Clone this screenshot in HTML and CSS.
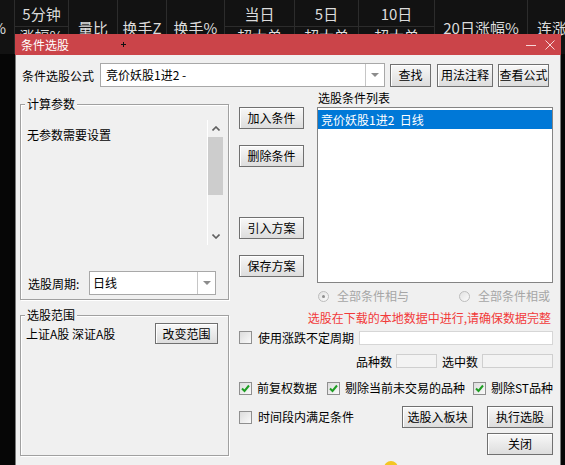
FILE: index.html
```html
<!DOCTYPE html>
<html lang="zh-CN">
<head>
<meta charset="utf-8">
<title>条件选股</title>
<link rel="stylesheet" href="styles.css">
</head>
<body>
<div class="quote-head">
  <div class="hcell span clip"><span>涨幅%</span></div>
  <div class="hcell top">5分钟</div>
  <div class="hcell span">量比</div>
  <div class="hcell span">换手Z</div>
  <div class="hcell span">换手%</div>
  <div class="hcell top">当日</div>
  <div class="hcell top">5日</div>
  <div class="hcell top">10日</div>
  <div class="hcell span">20日涨幅%</div>
  <div class="hcell span lead">连涨天数</div>
  <div class="hcell sub">涨幅%</div>
  <div class="hcell sub">超大单</div>
  <div class="hcell sub">超大单</div>
  <div class="hcell sub">超大单</div>
</div>

<div class="dialog">
  <div class="titlebar">
    <span class="title">条件选股</span>
    <span class="cursor"></span>
    <span class="win-btns">
      <svg class="win-icon" viewBox="0 0 10 10"><path d="M0 5.5H10"/></svg>
      <svg class="win-icon" viewBox="0 0 10 10"><path d="M0.5 0.5L9.5 9.5M9.5 0.5L0.5 9.5"/></svg>
    </span>
  </div>
  <div class="dlg-body">
    <div class="formula-row">
      <span class="formula-label">条件选股公式</span>
      <div class="combo formula-combo">
        <span class="combo-text">竞价妖股1进2 -</span>
        <span class="combo-btn"><i class="caret"></i></span>
      </div>
      <button class="btn btn-find">查找</button>
      <button class="btn btn-usage">用法注释</button>
      <button class="btn btn-view">查看公式</button>
    </div>

    <div class="main-row">
      <fieldset class="group params">
        <legend>计算参数</legend>
        <div class="param-panel">
          <div class="param-text">无参数需要设置</div>
          <div class="vscroll">
            <span class="vs-arrow"><svg viewBox="0 0 8 5"><path d="M0.5 4.5L4 1L7.5 4.5"/></svg></span>
            <span class="vs-thumb"></span>
            <span class="vs-track"></span>
            <span class="vs-arrow"><svg viewBox="0 0 8 5"><path d="M0.5 0.5L4 4L7.5 0.5"/></svg></span>
          </div>
        </div>
        <div class="period-row">
          <span class="period-label">选股周期:</span>
          <div class="combo period-combo">
            <span class="combo-text">日线</span>
            <span class="combo-btn"><i class="caret"></i></span>
          </div>
        </div>
      </fieldset>

      <div class="mid-col">
        <button class="btn mid-btn">加入条件</button>
        <button class="btn mid-btn">删除条件</button>
        <button class="btn mid-btn gap-big">引入方案</button>
        <button class="btn mid-btn">保存方案</button>
      </div>

      <div class="list-col">
        <div class="list-label">选股条件列表</div>
        <div class="cond-list">
          <div class="cond-item selected">竞价妖股1进2&nbsp;&nbsp;日线</div>
        </div>
        <div class="radio-row">
          <span class="radio-group"><span class="radio checked"></span><span class="radio-text">全部条件相与</span></span>
          <span class="radio-group second"><span class="radio"></span><span class="radio-text">全部条件相或</span></span>
        </div>
      </div>
    </div>

    <div class="bottom-row">
      <fieldset class="group range">
        <legend>选股范围</legend>
        <div class="range-row">
          <span class="range-text">上证A股 深证A股</span>
          <button class="btn btn-range">改变范围</button>
        </div>
      </fieldset>

      <div class="opt-col">
        <div class="warn">选股在下载的本地数据中进行,请确保数据完整</div>
        <div class="opt-line period-opt">
          <span class="check"></span><span class="check-text">使用涨跌不定周期</span>
          <span class="text-input"></span>
        </div>
        <div class="opt-line count-line">
          <span>品种数</span><span class="count-box short"></span>
          <span class="count-label2">选中数</span><span class="count-box long"></span>
        </div>
        <div class="opt-line checks-line">
          <span class="check-group g1"><span class="check on"><svg viewBox="0 0 11 11"><path d="M2 5.5L4.5 8L9 2.5"/></svg></span><span class="check-text">前复权数据</span></span>
          <span class="check-group g2"><span class="check on"><svg viewBox="0 0 11 11"><path d="M2 5.5L4.5 8L9 2.5"/></svg></span><span class="check-text">剔除当前未交易的品种</span></span>
          <span class="check-group g3"><span class="check on"><svg viewBox="0 0 11 11"><path d="M2 5.5L4.5 8L9 2.5"/></svg></span><span class="check-text">剔除ST品种</span></span>
        </div>
        <div class="opt-line action-line">
          <span class="check"></span><span class="check-text">时间段内满足条件</span>
          <button class="btn btn-block">选股入板块</button>
          <button class="btn btn-run">执行选股</button>
        </div>
        <div class="close-line">
          <button class="btn btn-run">关闭</button>
        </div>
      </div>
    </div>
  </div>
</div>
<span class="peek-dot"></span>
</body>
</html>
```

FILE: styles.css
```css
* { box-sizing: border-box; }
html, body { margin: 0; padding: 0; }
body {
  width: 565px;
  height: 465px;
  overflow: hidden;
  position: relative;
  background: #060606;
  font-family: "Noto Sans CJK SC", "Noto Sans", sans-serif;
  font-size: 12px;
  color: #000;
}

/* quote table header behind the dialog */
.quote-head {
  display: grid;
  grid-template-columns: 14px 54px 49px 49px 58px 70px 64px 76px 93px 38px;
  grid-template-rows: 27px 27px;
  width: 565px;
  height: 54px;
  overflow: hidden;
  background: #121212;
  color: #dcdcdc;
  font-size: 15px;
}
.hcell {
  border-left: 1px solid #2c2c2c;
  display: flex;
  align-items: center;
  justify-content: center;
  white-space: nowrap;
  overflow: hidden;
}
.hcell.span { grid-row: span 2; }
.hcell.top { border-bottom: 1px solid #2c2c2c; padding-top: 1px; }
.hcell.sub { padding-bottom: 10px; }
.hcell.clip { justify-content: flex-end; padding-right: 8px; border-left: 0; }
.hcell.lead { justify-content: flex-start; padding-left: 9px; }

/* dialog window */
.dialog {
  position: absolute;
  left: 15px;
  top: 34px;
  width: 546px;
  height: 440px;
  background: #f0f0f0;
  border-left: 1px solid #7a7a7a;
  border-right: 1px solid #7a7a7a;
}
.titlebar {
  position: relative;
  height: 21px;
  margin: 0 -1px;
  background: #cb4449;
  color: #fff;
  display: flex;
  align-items: center;
  padding-left: 6px;
  padding-right: 6px;
  font-size: 12px;
}
.title { line-height: 14px; }
.cursor {
  position: absolute;
  left: 106px;
  top: 8px;
  width: 5px;
  height: 5px;
  background:
    linear-gradient(#111, #111) center / 1px 5px no-repeat,
    linear-gradient(#111, #111) center / 5px 1px no-repeat;
}
.win-btns { margin-left: auto; display: flex; gap: 9px; }
.win-icon { width: 10px; height: 10px; fill: none; stroke: #f6d6d7; stroke-width: 1; }

.dlg-body { padding-left: 4px; }

.btn {
  font: inherit;
  color: #000;
  padding: 0;
  border: 1px solid #707070;
  background: linear-gradient(#f8f8f8, #dddddd);
  box-shadow: inset 1px 1px 0 #ffffff;
  height: 22px;
  line-height: 20px;
  text-align: center;
  white-space: nowrap;
}

/* row 1 */
.formula-row {
  display: flex;
  align-items: center;
  margin-top: 8px;
  height: 24px;
}
.formula-label { width: 80px; padding-left: 2px; }
.combo {
  display: flex;
  height: 24px;
  border: 1px solid #a8a8a8;
  background: #fff;
}
.combo-text { flex: 1; padding-left: 5px; line-height: 22px; white-space: nowrap; }
.combo-btn {
  width: 19px;
  border-left: 1px solid #c6c6c6;
  display: flex;
  align-items: center;
  justify-content: center;
}
.caret {
  width: 0;
  height: 0;
  border-left: 4px solid transparent;
  border-right: 4px solid transparent;
  border-top: 4px solid #8c8c8c;
}
.formula-combo { width: 285px; }
.btn-find { margin-left: 5px; width: 41px; height: 23px; }
.btn-usage { margin-left: 6px; width: 56px; height: 23px; }
.btn-view { margin-left: 5px; width: 51px; height: 23px; }

/* group boxes */
.group {
  margin: 0;
  padding: 0 5px 0 4px;
  min-width: 0;
  border: 1px solid #a0a0a0;
  box-shadow: inset 1px 1px 0 #fff, 1px 1px 0 #fff;
}
.group legend {
  padding: 0 2px;
  line-height: 14px;
  font-size: 12px;
  background: #f0f0f0;
}

/* main area */
.main-row { display: flex; align-items: flex-start; margin-top: 4px; }
.params { width: 209px; height: 203px; margin-top: 6px; }
.param-panel { display: flex; height: 125px; margin-top: 9px; }
.param-text { flex: 1; padding: 8px 2px 0; line-height: 14px; }
.vscroll {
  width: 16px;
  border-left: 1px solid #fff;
  display: flex;
  flex-direction: column;
  background: #f0f0f0;
}
.vs-arrow {
  height: 17px;
  display: flex;
  align-items: center;
  justify-content: center;
}
.vs-arrow svg { width: 8px; height: 5px; fill: none; stroke: #606060; stroke-width: 1.6; }
.vs-thumb { height: 58px; background: #cdcdcd; }
.vs-track { flex: 1; }
.period-row { display: flex; align-items: center; margin-top: 26px; height: 24px; }
.period-label { width: 61px; margin-left: 3px; }
.period-combo { width: 127px; }
.period-combo .combo-btn { width: 18px; }
.period-combo .combo-text { padding-left: 3px; }

.mid-col { display: flex; flex-direction: column; margin-left: 10px; width: 65px; }
.mid-btn { margin-top: 16px; width: 65px; }
.mid-btn.gap-big { margin-top: 50px; }

.list-col { margin-left: 13px; width: 236px; }
.list-label { line-height: 14px; padding-left: 1px; }
.cond-list {
  margin-top: 2px;
  height: 176px;
  border: 1px solid #848484;
  background: #fff;
  padding-top: 2px;
}
.cond-item { height: 19px; line-height: 19px; padding-left: 3px; white-space: nowrap; }
.cond-item.selected { background: #0078d7; color: #fff; }
.radio-row { display: flex; align-items: center; margin-top: 6px; height: 14px; padding-right: 3px; }
.radio-group { display: flex; align-items: center; margin-left: 1px; }
.radio-group.second { margin-left: auto; }
.radio {
  width: 11px;
  height: 11px;
  border-radius: 50%;
  border: 1px solid #bdbdbd;
  background: linear-gradient(135deg, #e2e2e2, #fbfbfb);
  position: relative;
}
.radio.checked::after {
  content: "";
  position: absolute;
  left: 3px;
  top: 3px;
  width: 3px;
  height: 3px;
  border-radius: 50%;
  background: #8e8e8e;
}
.radio-text { margin-left: 8px; color: #a6a6a6; line-height: 14px; }

/* bottom area */
.bottom-row { display: flex; align-items: flex-start; }
.range { width: 209px; height: 148px; margin-top: 5px; }
.range-row { display: flex; align-items: center; margin-top: 1px; height: 21px; }
.range-text { margin-left: 1px; }
.btn-range { margin-left: auto; margin-right: 5px; width: 63px; height: 21px; line-height: 19px; }

.opt-col { margin-left: 10px; width: 314px; }
.warn {
  margin-top: 8px;
  line-height: 14px;
  text-align: right;
  padding-right: 2px;
  color: #f23a3a;
  white-space: nowrap;
}
.opt-line { display: flex; align-items: center; }
.check {
  width: 13px;
  height: 13px;
  flex: none;
  border: 1px solid #8f8f8f;
  background: linear-gradient(135deg, #dcdcdc, #fafafa);
  display: flex;
  align-items: center;
  justify-content: center;
}
.check svg { width: 11px; height: 11px; fill: none; stroke: #1e9e23; stroke-width: 2; }
.check-text { margin-left: 6px; line-height: 14px; white-space: nowrap; }
.period-opt { margin-top: 5px; height: 15px; }
.text-input {
  margin-left: auto;
  width: 194px;
  height: 14px;
  background: #fff;
  border: 1px solid #d6d6d6;
}
.count-line { margin-top: 9px; height: 14px; justify-content: flex-end; }
.count-box {
  height: 14px;
  margin-left: 4px;
  border: 1px solid #cfcfcf;
  background: #f3f3f3;
}
.count-box.short { width: 41px; }
.count-box.long { width: 71px; }
.count-label2 { margin-left: 5px; }
.checks-line { margin-top: 13px; height: 14px; }
.check-group { display: flex; align-items: center; }
.check-group .check-text { margin-left: 5px; }
.g1 { width: 88px; }
.g2 { width: 146px; }
.action-line { margin-top: 11px; height: 22px; }
.btn-block { margin-left: auto; width: 71px; }
.btn-run { margin-left: 14px; width: 66px; }
.close-line { display: flex; justify-content: flex-end; margin-top: 5px; }
.close-line .btn-run { margin-left: 0; }

.peek-dot {
  position: absolute;
  left: 384px;
  top: 461px;
  width: 14px;
  height: 14px;
  border-radius: 50%;
  background: #f3c623;
}
```
